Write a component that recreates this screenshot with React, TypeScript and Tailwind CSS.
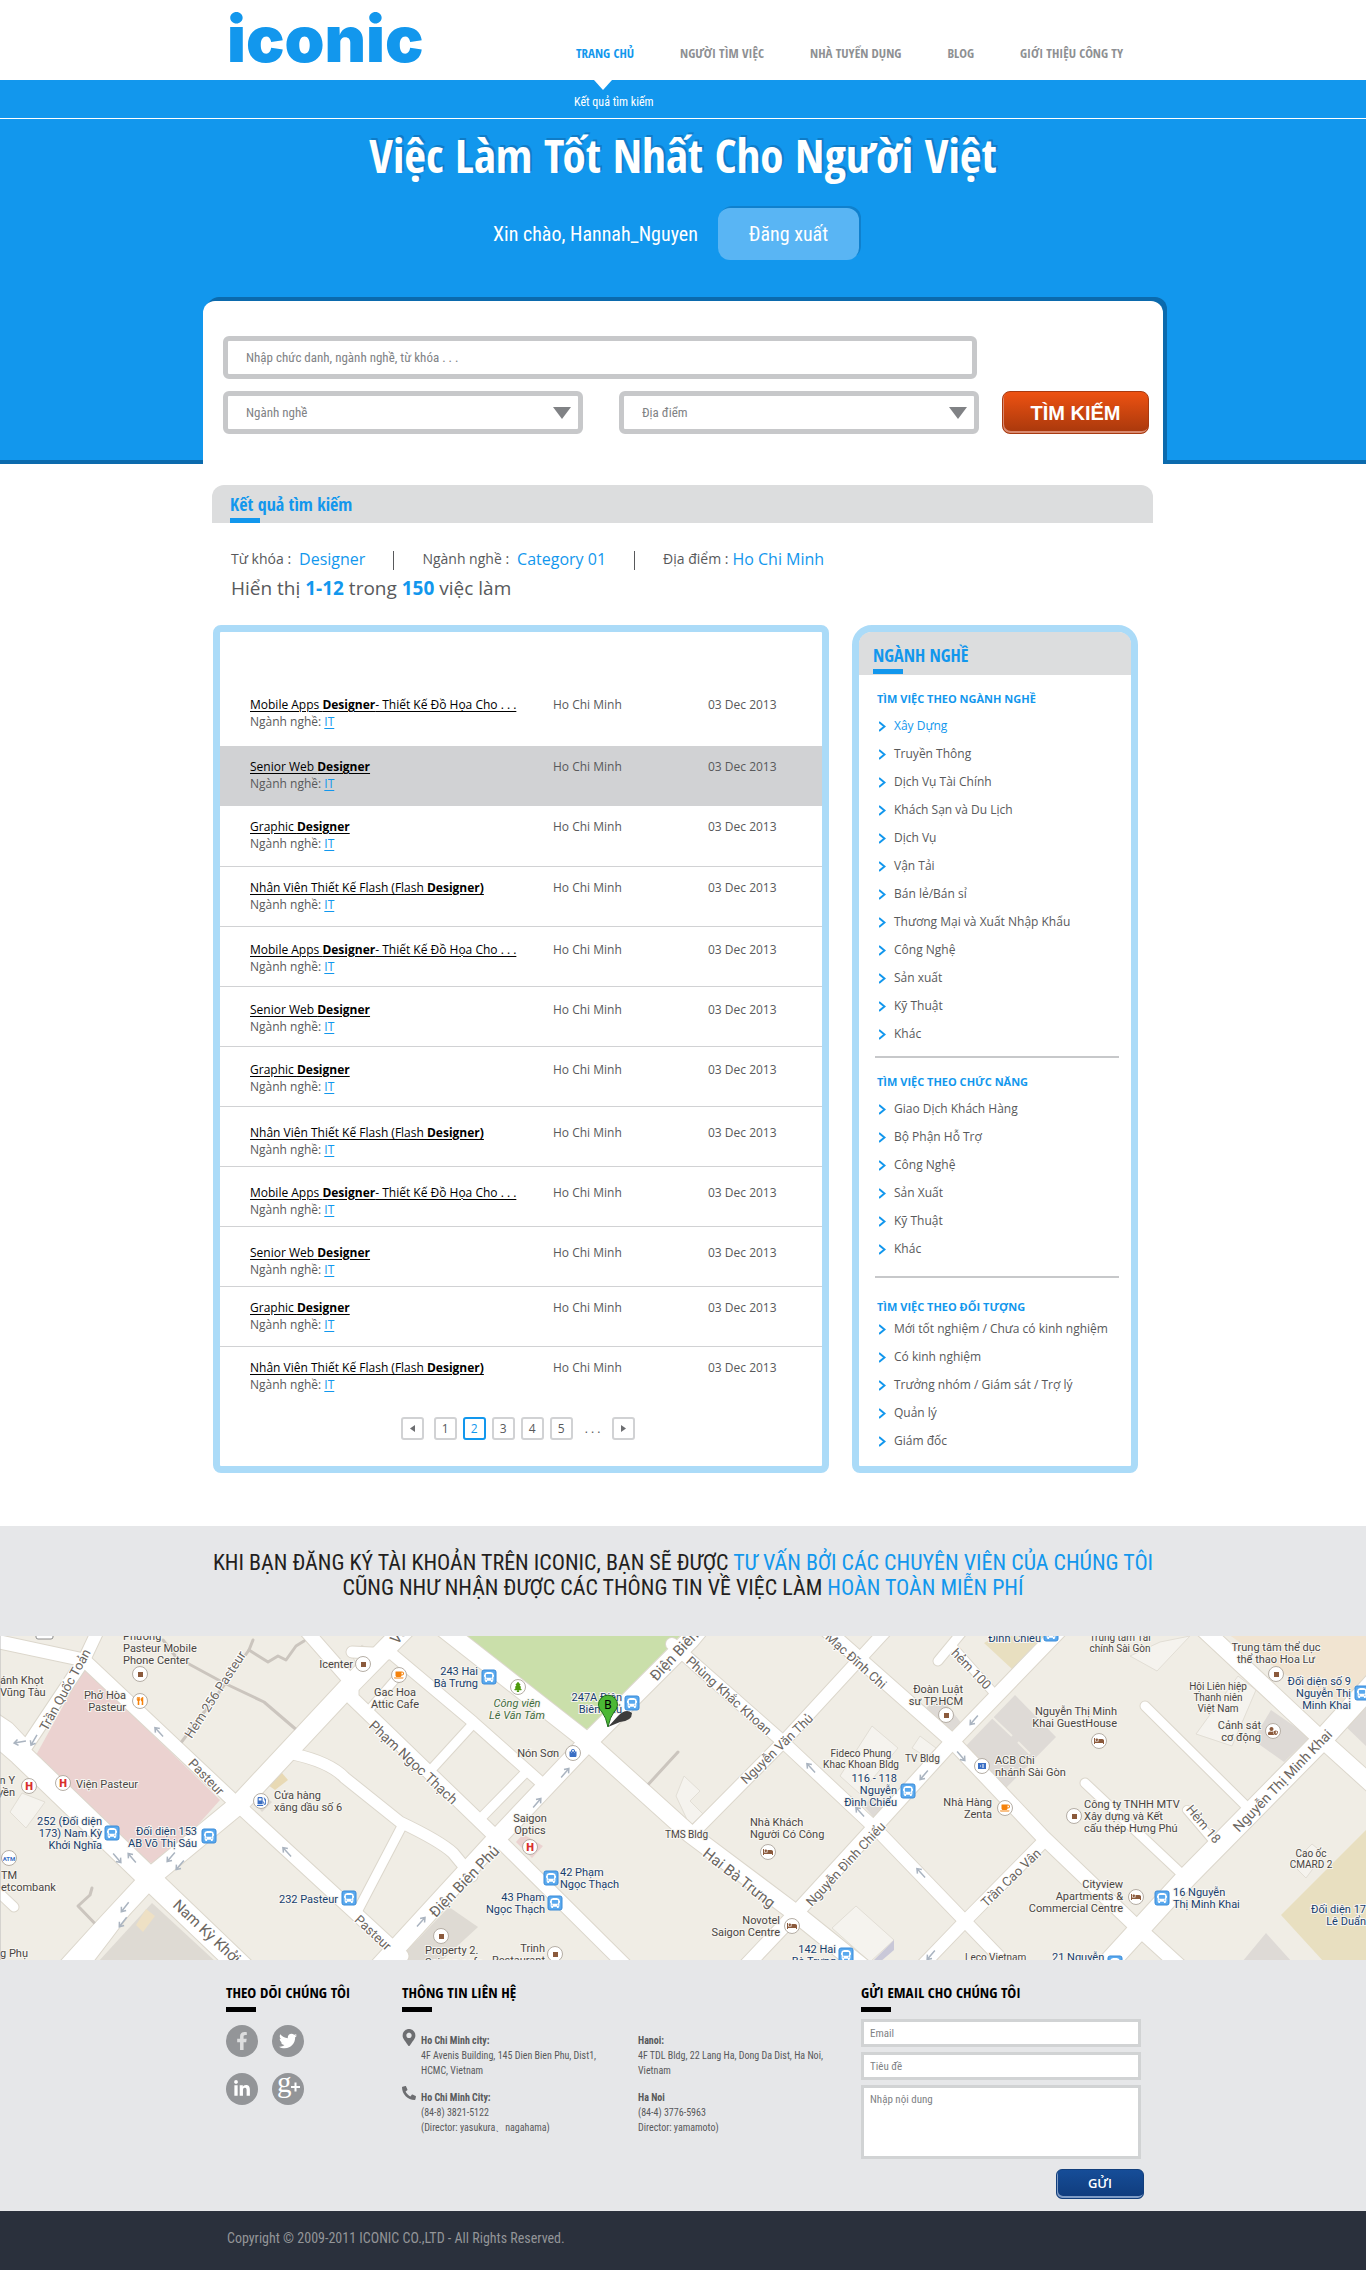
import type { ReactNode } from "react";
import {
  FaBed,
  FaBus,
  FaCoffee,
  FaFacebookF,
  FaGasPump,
  FaLinkedinIn,
  FaMapMarkerAlt,
  FaPhone,
  FaShoppingBag,
  FaTree,
  FaTwitter,
  FaUserShield,
  FaUtensils,
} from "react-icons/fa";

const CONDENSED_BOLD = "font-['Open_Sans_Condensed','Open_Sans',sans-serif] font-bold";
const CONDENSED = "font-['Roboto_Condensed',Roboto,sans-serif]";

/* ------------------------------------------------------------------ */
/* Header and hero                                                     */
/* ------------------------------------------------------------------ */

const navItems = ["TRANG CHỦ", "NGƯỜI TÌM VIỆC", "NHÀ TUYỂN DỤNG", "BLOG", "GIỚI THIỆU CÔNG TY"];

function Header() {
  return (
    <header className="bg-white">
      <div className="mx-auto flex h-20 max-w-[960px] items-start justify-between pl-6 pr-10">
        <a href="#" className="font-[Inter,sans-serif] text-[64px] font-black leading-[78px] text-[#1297ed]">
          iconic
        </a>
        <nav className={`${CONDENSED_BOLD} mt-[43px] flex gap-[46px] text-[13px] leading-5 text-[#8e9093]`}>
          {navItems.map((item, i) => (
            <a key={item} href="#" className={i === 0 ? "text-[#1297ed]" : ""}>
              {item}
            </a>
          ))}
        </nav>
      </div>
    </header>
  );
}

function SelectBox({ label, id }: { label: string; id: string }) {
  return (
    <div className="relative w-[360px]">
      <select
        id={id}
        aria-label={label}
        className={`${CONDENSED} h-[43px] w-full appearance-none rounded-md border-[5px] border-[#c7c8ca] bg-white px-[18px] text-[13px] text-[#808285]`}
      >
        <option>{label}</option>
      </select>
      <svg className="pointer-events-none absolute right-3 top-4 h-3 w-[18px]" viewBox="0 0 18 12" aria-hidden="true">
        <path d="M0 0h18L9 12z" fill="#808285" />
      </svg>
    </div>
  );
}

function Hero() {
  return (
    <section className="bg-[#1297ed] shadow-[inset_0_-4px_0_#0b6aad]">
      <div className="border-b border-white">
        <div className="mx-auto h-[38px] max-w-[960px] pl-[371px]">
          <svg className="ml-5 h-[10px] w-[18px]" viewBox="0 0 18 10" aria-hidden="true">
            <path d="M0 0h18L9 10z" fill="#fff" />
          </svg>
          <a href="#" className={`${CONDENSED} block text-[12px] leading-6 text-white`}>
            Kết quả tìm kiếm
          </a>
        </div>
      </div>

      <h1
        className={`${CONDENSED_BOLD} pt-2 text-center text-[47px] leading-[56px] text-white [text-shadow:2px_-2px_0_#0f7cc7]`}
      >
        Việc Làm Tốt Nhất Cho Người Việt
      </h1>

      <div className={`${CONDENSED} mt-[25px] flex items-center justify-center gap-5 pr-3.5 text-[20px] text-white`}>
        <span>Xin chào, Hannah_Nguyen</span>
        <button
          type="button"
          className="h-[52px] w-[141px] rounded-xl bg-[#59b5f4] shadow-[2px_-2px_0_#0f80cd]"
        >
          Đăng xuất
        </button>
      </div>

      <form
        className="mx-auto mt-[41px] h-[163px] max-w-[960px] rounded-t-xl bg-white pl-5 pr-3.5 pt-[35px] shadow-[4px_-4px_0_#0b6aad]"
        onSubmit={(e) => e.preventDefault()}
      >
        <input
          type="text"
          aria-label="Từ khóa"
          placeholder="Nhập chức danh, ngành nghề, từ khóa . . ."
          className={`${CONDENSED} block h-[43px] w-[754px] rounded-md border-[5px] border-[#c7c8ca] bg-white px-[18px] text-[13px] placeholder:text-[#808285]`}
        />
        <div className="mt-3 flex">
          <SelectBox label="Ngành nghề" id="category" />
          <div className="ml-9">
            <SelectBox label="Địa điểm" id="location" />
          </div>
          <button
            type="submit"
            className="ml-[23px] h-[43px] w-[147px] rounded-lg border border-[#a83a10] bg-linear-to-b from-[#ee5212] to-[#a8380c] font-['Liberation_Sans',Arial,sans-serif] text-[20px] font-bold text-white shadow-[inset_1px_-2px_0_#d98a70]"
          >
            TÌM KIẾM
          </button>
        </div>
      </form>
    </section>
  );
}

/* ------------------------------------------------------------------ */
/* Search results                                                      */
/* ------------------------------------------------------------------ */

function ResultSummary() {
  return (
    <>
      <div className="ml-[9px] mr-2.5 h-[38px] rounded-t-xl bg-[#dcddde] pl-[18px] pt-[7px]">
        <h2 className={`${CONDENSED_BOLD} text-[18px] leading-6 text-[#1297ed]`}>Kết quả tìm kiếm</h2>
        <div className="mt-0.5 h-[5px] w-[30px] bg-[#1297ed]" />
      </div>

      <div className="pl-7 text-[#58595b]">
        <div className="mt-6 flex text-[14px] leading-6">
          <span>Từ khóa :</span>
          <span className="ml-2 text-[16px] font-medium text-[#1297ed]">Designer</span>
          <span className="mx-7 h-[19px] w-px translate-y-1 bg-[#58595b]" />
          <span>Ngành nghề :</span>
          <span className="ml-2 text-[16px] font-medium text-[#1297ed]">Category 01</span>
          <span className="mx-7 h-[19px] w-px translate-y-1 bg-[#58595b]" />
          <span>Địa điểm :</span>
          <span className="ml-1 text-[16px] font-medium text-[#1297ed]">Ho Chi Minh</span>
        </div>
        <p className="mt-[3px] text-[19px] leading-7">
          Hiển thị <b className="text-[#1297ed]">1-12</b> trong <b className="text-[#1297ed]">150</b> việc làm
        </p>
      </div>
    </>
  );
}

const jobTitles: ReactNode[] = [
  <>
    Mobile Apps <b>Designer</b>- Thiết Kế Đồ Họa Cho . . .
  </>,
  <>
    Senior Web <b>Designer</b>
  </>,
  <>
    Graphic <b>Designer</b>
  </>,
  <>
    Nhân Viên Thiết Kế Flash (Flash <b>Designer)</b>
  </>,
];

const rowPadding = ["pt-3", "pt-3.5", "pt-[17px]"];
const rows = [0, 0, 0, 0, 1, 1, 1, 2, 2, 2, 0, 0].map((pad, i) => ({
  title: jobTitles[i % 4],
  pad: rowPadding[pad],
  height: i === 0 ? "h-[62px]" : "h-[60px]",
  active: i === 1,
  ruled: i > 1 && i < 11,
}));

function JobTable() {
  return (
    <table className="w-full table-fixed border-collapse text-left align-top text-[12px] leading-[17px] text-[#58595b]">
      <colgroup>
        <col className="w-[333px]" />
        <col className="w-[155px]" />
        <col />
      </colgroup>
      <tbody>
        {rows.map((row, i) => (
          <tr
            key={i}
            className={`${row.height} align-top ${row.active ? "bg-[#d1d2d4]" : ""} ${
              row.ruled ? "border-b border-[#d1d2d4]" : ""
            }`}
          >
            <td className={`${row.pad} pl-[30px]`}>
              <a href="#" className="text-black underline underline-offset-2">
                {row.title}
              </a>
              <div>
                Ngành nghề:{" "}
                <a href="#" className="text-[#1297ed] underline underline-offset-2">
                  IT
                </a>
              </div>
            </td>
            <td className={row.pad}>Ho Chi Minh</td>
            <td className={row.pad}>03 Dec 2013</td>
          </tr>
        ))}
      </tbody>
    </table>
  );
}

function PageButton({ children, active, label }: { children: ReactNode; active?: boolean; label?: string }) {
  return (
    <button
      type="button"
      aria-label={label}
      className={`flex h-[23px] w-[23px] items-center justify-center rounded-[3px] border-2 ${
        active ? "border-[#1297ed] text-[#1297ed]" : "border-[#d1d2d4]"
      }`}
    >
      {children}
    </button>
  );
}

function Pagination() {
  return (
    <nav
      aria-label="Phân trang"
      className="mt-[11px] flex items-center justify-center gap-1.5 pr-1.5 text-[12px] leading-4 text-[#58595b]"
    >
      <div className="mr-1">
        <PageButton label="Trang trước">
          <svg className="h-[7px] w-[5px]" viewBox="0 0 5 7" aria-hidden="true">
            <path d="M5 0v7L0 3.500z" fill="#6d6e71" />
          </svg>
        </PageButton>
      </div>
      {["1", "2", "3", "4", "5"].map((n) => (
        <PageButton key={n} active={n === "2"}>
          {n}
        </PageButton>
      ))}
      <span className="mx-1.5">. . .</span>
      <PageButton label="Trang sau">
        <svg className="h-[7px] w-[5px]" viewBox="0 0 5 7" aria-hidden="true">
          <path d="M0 0v7l5-3.500z" fill="#6d6e71" />
        </svg>
      </PageButton>
    </nav>
  );
}

const groups = [
  {
    title: "TÌM VIỆC THEO NGÀNH NGHỀ",
    spacing: "pt-4",
    listSpacing: "mt-[5px]",
    items: [
      "Xây Dựng",
      "Truyền Thông",
      "Dịch Vụ Tài Chính",
      "Khách Sạn và Du Lịch",
      "Dịch Vụ",
      "Vận Tải",
      "Bán lẻ/Bán sỉ",
      "Thương Mại và Xuất Nhập Khẩu",
      "Công Nghệ",
      "Sản xuất",
      "Kỹ Thuật",
      "Khác",
    ],
  },
  {
    title: "TÌM VIỆC THEO CHỨC NĂNG",
    spacing: "mt-2 border-t-2 border-[#c7c8ca] pt-4",
    listSpacing: "mt-[5px]",
    items: ["Giao Dịch Khách Hàng", "Bộ Phận Hỗ Trợ", "Công Nghệ", "Sản Xuất", "Kỹ Thuật", "Khác"],
  },
  {
    title: "TÌM VIỆC THEO ĐỐI TƯỢNG",
    spacing: "mt-[13px] border-t-2 border-[#c7c8ca] pt-[21px]",
    listSpacing: "",
    items: [
      "Mới tốt nghiệm / Chưa có kinh nghiệm",
      "Có kinh nghiệm",
      "Trưởng nhóm / Giám sát / Trợ lý",
      "Quản lý",
      "Giám đốc",
    ],
  },
];

function Sidebar() {
  return (
    <aside className="w-[286px] shrink-0 rounded-b-lg rounded-t-[20px] border-[7px] border-[#abdbf8] bg-white pb-2.5">
      <div className="h-[43px] rounded-t-xl bg-[#dcddde] pl-3.5 pt-[9px]">
        <h2 className={`${CONDENSED_BOLD} text-[18px] leading-7 text-[#1297ed]`}>NGÀNH NGHỀ</h2>
        <div className="h-[5px] w-[30px] bg-[#1297ed]" />
      </div>
      {groups.map((group, g) => (
        <section key={group.title} className={`ml-4 mr-3 ${group.spacing}`}>
          <h3 className="pl-0.5 text-[11px] font-bold leading-4 text-[#1297ed]">{group.title}</h3>
          <ul className={`${group.listSpacing} pl-1 text-[12px] leading-7 text-[#58595b]`}>
            {group.items.map((item, i) => (
              <li key={item}>
                <a href="#" className={`flex items-center gap-2 ${g === 0 && i === 0 ? "text-[#1297ed]" : ""}`}>
                  <svg className="h-[11px] w-[7px]" viewBox="0 0 7 11" fill="none" aria-hidden="true">
                    <path d="M0 1l5.500 4.500L0 10" stroke="#1297ed" strokeWidth="2" />
                  </svg>
                  {item}
                </a>
              </li>
            ))}
          </ul>
        </section>
      ))}
    </aside>
  );
}

/* ------------------------------------------------------------------ */
/* Street map                                                          */
/* ------------------------------------------------------------------ */

type Road = [string, number];

const roads: Road[] = [
  ["M0 6L84 24L238 169L352 274L402 320", 13],
  ["M100 -10L84 24L26 111L8 92L-10 80", 12],
  ["M-10 92L20 118L152 245L245 334", 22],
  ["M60 340L100 296L152 240L238 169L352 47L408 -10", 19],
  ["M152 240L128 268L104 300L78 334", 14],
  ["M302 -10L352 47L352 62L497 202L630 334", 13],
  ["M352 16L392 18L473 86L546 151", 11],
  ["M400 38L367 76", 8],
  ["M471 90L429 136", 9],
  ["M528 134L480 183", 9],
  ["M293 118Q330 126 345 142L400 186Q440 205 453 217L472 240", 11],
  ["M402 190L357 276", 9],
  ["M376 334L497 202L588 106L690 4L700 -8", 18],
  ["M440 -10L588 106L690 198L794 276L866 334", 17],
  ["M672 8L781 104L877 194L1012 334", 12],
  ["M822 -10L951 104L1043 201L1139 293L1184 334", 14],
  ["M890 -10L785 104L690 200", 12],
  ["M1064 -10L951 107L872 194L796 277L742 334", 14],
  ["M918 334L969 281L1045 204", 12],
  ["M1102 334L1187 241L1319 107L1380 40", 20],
  ["M1200 -10L1319 101L1380 156", 16],
  ["M1145 70L1249 173", 9],
  ["M1085 147L1185 241", 9],
  ["M1187 174L1216 208", 8],
  ["M962 -4L938 25", 9],
  ["M953 11L993 56", 8],
  ["M-5 253L14 271", 9],
];

const paths = [
  "M163 4L176 21L224 47L264 66L299 96",
  "M253 4L249 14L220 55L180 108",
  "M249 14L268 26L278 20L286 24L296 10L304 5",
  "M678 116L645 152",
  "M92 252L90 259L78 270L103 296",
];

type Place = { x: number; y: number; lines: string[]; at?: "start" | "middle" | "end"; kind?: "bus" | "park"; small?: boolean };

const places: Place[] = [
  { x: 123, y: 4, lines: ["Phương", "Pasteur Mobile", "Phone Center"] },
  { x: 0, y: 48, lines: ["ánh Khọt", "Vũng Tàu"] },
  { x: 126, y: 63, lines: ["Phở Hòa", "Pasteur"], at: "end" },
  { x: 353, y: 32, lines: ["Icenter"], at: "end" },
  { x: 395, y: 60, lines: ["Gac Hoa", "Attic Cafe"], at: "middle" },
  { x: 478, y: 39, lines: ["243 Hai", "Bà Trưng"], at: "end", kind: "bus" },
  { x: 517, y: 71, lines: ["Công viên", "Lê Văn Tám"], at: "middle", kind: "park" },
  { x: 622, y: 65, lines: ["247A Điện", "Biên Phủ"], at: "end", kind: "bus" },
  { x: 559, y: 121, lines: ["Nón Sơn"], at: "end" },
  { x: 530, y: 186, lines: ["Saigon", "Optics"], at: "middle" },
  { x: 560, y: 240, lines: ["42 Phạm", "Ngọc Thạch"], kind: "bus" },
  { x: 545, y: 265, lines: ["43 Phạm", "Ngọc Thạch"], at: "end", kind: "bus" },
  { x: 425, y: 318, lines: ["Property 2.", "Saigon cafe"] },
  { x: 545, y: 316, lines: ["Trinh", "Restaurant"], at: "end" },
  { x: 338, y: 267, lines: ["232 Pasteur"], at: "end", kind: "bus" },
  { x: 274, y: 163, lines: ["Cửa hàng", "xăng dầu số 6"] },
  { x: 76, y: 152, lines: ["Viện Pasteur"] },
  { x: 102, y: 189, lines: ["252 (Đối diện", "173) Nam Kỳ", "Khởi Nghĩa"], at: "end", kind: "bus" },
  { x: 197, y: 199, lines: ["Đối diện 153", "AB Võ Thị Sáu"], at: "end", kind: "bus" },
  { x: 15, y: 148, lines: ["n Y", "yền"], at: "end" },
  { x: 1, y: 243, lines: ["TM", "etcombank"] },
  { x: 0, y: 321, lines: ["g Phụ"] },
  { x: 665, y: 202, lines: ["TMS Bldg"], small: true },
  { x: 1041, y: 6, lines: ["Đình Chiểu"], at: "end", kind: "bus" },
  { x: 1120, y: 5, lines: ["Trung tâm Tài", "chính Sài Gòn"], at: "middle", small: true },
  { x: 1276, y: 15, lines: ["Trung tâm thể dục", "thể thao Hoa Lư"], at: "middle" },
  { x: 1351, y: 49, lines: ["Đối diện số 9", "Nguyễn Thị", "Minh Khai"], at: "end", kind: "bus" },
  { x: 1218, y: 54, lines: ["Hội Liên hiệp", "Thanh niên", "Việt Nam"], at: "middle", small: true },
  { x: 1261, y: 93, lines: ["Cảnh sát", "cơ động"], at: "end" },
  { x: 963, y: 57, lines: ["Đoàn Luật", "sư TP.HCM"], at: "end" },
  { x: 1117, y: 79, lines: ["Nguyễn Thị Minh", "Khai GuestHouse"], at: "end" },
  { x: 861, y: 121, lines: ["Fideco Phung", "Khac Khoan Bldg"], at: "middle", small: true },
  { x: 905, y: 126, lines: ["TV Bldg"], small: true },
  { x: 897, y: 146, lines: ["116 - 118", "Nguyễn", "Đình Chiểu"], at: "end", kind: "bus" },
  { x: 995, y: 128, lines: ["ACB Chi", "nhánh Sài Gòn"] },
  { x: 992, y: 170, lines: ["Nhà Hàng", "Zenta"], at: "end" },
  { x: 750, y: 190, lines: ["Nhà Khách", "Người Có Công"] },
  { x: 1084, y: 172, lines: ["Công ty TNHH MTV", "Xây dựng và Kết", "cấu thép Hưng Phú"] },
  { x: 1311, y: 221, lines: ["Cao ốc", "CMARD 2"], at: "middle", small: true },
  { x: 1123, y: 252, lines: ["Cityview", "Apartments &", "Commercial Centre"], at: "end" },
  { x: 1173, y: 260, lines: ["16 Nguyễn", "Thị Minh Khai"], kind: "bus" },
  { x: 1366, y: 277, lines: ["Đối diện 17", "Lê Duẩn"], at: "end", kind: "bus" },
  { x: 780, y: 288, lines: ["Novotel", "Saigon Centre"], at: "end" },
  { x: 836, y: 317, lines: ["142 Hai", "Bà Trưng"], at: "end", kind: "bus" },
  { x: 965, y: 325, lines: ["Leco Vietnam"], small: true },
  { x: 1052, y: 325, lines: ["21 Nguyễn"], kind: "bus" },
];

/* name, centre x, centre y, angle, text size */
const streets: [string, number, number, number, number][] = [
  ["Trần Quốc Toản", 69, 56, -61, 13],
  ["Hẻm 256 Pasteur", 219, 61, -57, 13],
  ["Pasteur", 203, 144, 46, 13],
  ["Phạm Ngọc Thạch", 410, 130, 43, 14],
  ["Điện Biên Phủ", 468, 249, -46, 15],
  ["Pasteur", 370, 300, 43, 13],
  ["Nam Kỳ Khởi Nghĩa", 219, 314, 43, 15],
  ["Võ Thị Sáu", 420, -18, -50, 15],
  ["Điện Biên Phủ", 688, 12, -47, 15],
  ["Phùng Khắc Khoan", 726, 63, 42, 13],
  ["Mạc Đĩnh Chi", 853, 28, 42, 13],
  ["Nguyễn Văn Thủ", 780, 116, -44, 13],
  ["hẻm 100", 968, 36, 46, 13],
  ["Nguyễn Đình Chiểu", 849, 231, -47, 13],
  ["Hai Bà Trưng", 736, 246, 38, 15],
  ["Trần Cao Vân", 1014, 245, -44, 13],
  ["Nguyễn Thị Minh Khai", 1286, 148, -46, 14],
  ["Hẻm 18", 1200, 191, 50, 13],
];

const busStops = [
  [489, 41], [632, 67], [112, 197], [209, 200], [349, 262], [551, 242], [555, 267],
  [1051, -2], [1362, 57], [908, 155], [1162, 262], [846, 319], [1115, 327],
];

const dots = [[363, 28], [140, 38], [441, 300], [555, 318], [946, 79], [1276, 38], [1074, 180]];
const hospitals = [[29, 150], [63, 147], [530, 211]];
const beds = [[1099, 105], [768, 216], [792, 290], [1136, 261]];

const arrows: [number, number, number][] = [
  [159, 96, -133], [287, 216, -133], [34, 104, 120], [20, 106, 170], [117, 222, 50], [132, 222, -130],
  [171, 221, 130], [180, 229, 130], [125, 271, 128], [123, 286, 128], [565, 137, -50], [537, 167, -50],
  [421, 286, -48], [811, 132, -133], [860, 176, -133], [921, 237, -133], [961, 120, 50], [924, 139, 130],
  [974, 84, 130], [931, 319, 130],
];

function Poi({ x, y, children }: { x: number; y: number; children?: ReactNode }) {
  return (
    <g>
      <circle cx={x} cy={y} r="7.500" fill="#fff" stroke="#b5aea5" />
      {children}
    </g>
  );
}

function StreetMap() {
  return (
    <svg
      className="block h-[324px] w-full font-[Roboto,sans-serif]"
      viewBox="0 0 1366 324"
      preserveAspectRatio="xMidYMid slice"
      role="img"
      aria-label="Bản đồ"
    >
      <rect width="1366" height="324" fill="#f0ede5" />
      <path d="M84 32L220 164L169 221L152 227L132 221L35 121z" fill="#ebd2d0" />
      <path d="M464 -2H682L594 87Q588 95 579 94z" fill="#cadfaa" />
      <path d="M152 267L216 326H98z" fill="#dedad3" />
      <path d="M449 271L478 291L440 326H396z" fill="#dedad3" />
      <path d="M146 273L155 280L143 296L136 289z" fill="#eee0c4" />
      <path d="M282 137L288 144L275 154L268 149z" fill="#e8d9b4" />
      <path d="M254 166L262 176L272 166L262 158z" fill="#dedad3" />
      <path d="M523 198L543 210L532 222L516 206z" fill="#ebd2d0" />
      <path d="M1015 59L1056 101L1004 154L964 112z" fill="#dedad6" />
      <path d="M940 60L962 88L951 100L924 74z" fill="#dedad6" />
      <path d="M991 80L1012 100M1018 106L1030 118" stroke="#f0ede5" strokeWidth="2" />
      <path d="M1271 74L1310 101L1284 126L1253 104z" fill="#dedad6" />
      <path d="M1340 85L1366 110V62z" fill="#dedad6" />
      <path d="M1266 297L1242 326H1292z" fill="#dedad6" />
      <path d="M984 7L1000 -2H1045L1012 33z" fill="#e8dfc0" />
      <path d="M1366 194L1281 279L1324 326H1366z" fill="#e8dfc0" />
      <path d="M1228 -2H1366V48L1344 66L1310 56z" fill="#f1e4d1" />
      <path d="M870 162L892 176L874 182L864 170z" fill="#dedad6" />
      <g fill="#f5f3ee" stroke="#e2ded5">
        <path d="M22 157L45 166L26 192L10 176z" />
        <path d="M684 140L700 155L690 165L703 178L690 190L676 160z" />
        <path d="M872 90L898 112L860 158L840 140z" />
        <path d="M920 100L936 112L928 122L912 112z" />
        <path d="M1238 40L1256 54L1232 110L1196 98z" />
        <path d="M1130 20L1160 6L1190 0L1157 35z" />
        <path d="M1312 208L1324 218L1306 242L1292 228z" />
        <path d="M856 270L894 304L870 326L832 292z" />
        <path d="M352 20L362 9L373 18L360 34z" />
      </g>
      <path d="M894 304V314L880 326H872z" fill="#c9c8d8" />

      <g fill="none" strokeLinejoin="round" strokeLinecap="round">
        {roads.map(([d, w]) => (
          <path key={d} d={d} stroke="#dcd7cc" strokeWidth={w + 2} />
        ))}
        {paths.map((d) => (
          <path key={d} d={d} stroke="#cbc5be" strokeWidth="3" />
        ))}
        {roads.map(([d, w]) => (
          <path key={d} d={d} stroke="#fff" strokeWidth={w} />
        ))}
      </g>

      <g fill="none" stroke="#aab4c0" strokeWidth="1.500">
        {arrows.map(([x, y, a]) => (
          <path key={`${x}-${y}`} d="M-6 0H6M2 -3L6 0L2 3" transform={`translate(${x} ${y}) rotate(${a})`} />
        ))}
      </g>

      <g fill="#6b6661" textAnchor="middle" stroke="#fff" strokeWidth="2" paintOrder="stroke">
        {streets.map(([name, x, y, a, size]) => (
          <text key={`${name}-${x}`} fontSize={size} transform={`translate(${x} ${y}) rotate(${a})`}>
            {name}
          </text>
        ))}
      </g>

      {busStops.map(([x, y]) => (
        <g key={`${x}-${y}`}>
          <rect x={x - 7} y={y - 7} width="14" height="14" rx="2" fill="#5aa9ee" stroke="#3a8bd8" />
          <FaBus x={x - 5} y={y - 5} size={10} color="#fff" />
        </g>
      ))}
      {dots.map(([x, y]) => (
        <Poi key={`${x}-${y}`} x={x} y={y}>
          <rect x={x - 2} y={y - 2} width="5" height="5" fill="#8b5a3c" />
        </Poi>
      ))}
      {hospitals.map(([x, y]) => (
        <Poi key={`${x}-${y}`} x={x} y={y}>
          <text x={x} y={y + 4} fontSize="11" fontWeight="900" textAnchor="middle" fill="#d9302c">
            H
          </text>
        </Poi>
      ))}
      {beds.map(([x, y]) => (
        <Poi key={`${x}-${y}`} x={x} y={y}>
          <FaBed x={x - 5} y={y - 5} size={10} color="#8b5a3c" />
        </Poi>
      ))}
      <Poi x={140} y={65}>
        <FaUtensils x={136} y={61} size={8} color="#f5820b" />
      </Poi>
      <Poi x={399} y={39}>
        <FaCoffee x={394} y={34} size={10} color="#f5820b" />
      </Poi>
      <Poi x={1005} y={172}>
        <FaCoffee x={1000} y={167} size={10} color="#f5820b" />
      </Poi>
      <Poi x={261} y={165}>
        <FaGasPump x={257} y={161} size={9} color="#3b6fc4" />
      </Poi>
      <Poi x={518} y={51}>
        <FaTree x={513} y={46} size={10} color="#4d9a0b" />
      </Poi>
      <Poi x={573} y={117}>
        <FaShoppingBag x={569} y={113} size={8} color="#3b6fc4" />
      </Poi>
      <Poi x={1273} y={95}>
        <FaUserShield x={1268} y={90} size={10} color="#8b5a3c" />
      </Poi>
      <Poi x={982} y={130}>
        <rect x="978" y="127" width="8" height="6" fill="#3b6fc4" />
        <path d="M980 130h1M983 128v4" stroke="#fff" />
      </Poi>
      <Poi x={9} y={222}>
        <text x="9" y="225" fontSize="6" fontWeight="700" textAnchor="middle" fill="#3b6fc4">
          ATM
        </text>
      </Poi>
      <rect x="36" y="-8" width="17" height="11" rx="2" fill="#fff" stroke="#8b8b8b" />

      <g stroke="#f7f5f0" strokeWidth="2" paintOrder="stroke">
        {places.map((p) => (
          <text
            key={`${p.x}-${p.y}`}
            y={p.y}
            fontSize={p.small ? 10 : 11}
            textAnchor={p.at ?? "start"}
            fontStyle={p.kind === "park" ? "italic" : "normal"}
            fill={p.kind === "bus" ? "#17406d" : p.kind === "park" ? "#3f6b3c" : "#4a4542"}
          >
            {p.lines.map((line, i) => (
              <tspan key={line} x={p.x} dy={i === 0 ? 0 : p.small ? 11 : 12}>
                {line}
              </tspan>
            ))}
          </text>
        ))}
      </g>

      <path d="M608 91L618 80Q626 72 632 77Q632 85 620 86z" fill="#3c3c3c" />
      <path
        d="M608 91Q606 81 602 76A9.500 9.500 0 1 1 614 76Q610 81 608 91z"
        fill="#4bb834"
        stroke="#1c6b18"
      />
      <text x="608" y="73" fontSize="12" textAnchor="middle" fill="#000">
        B
      </text>
      <path d="M0 0V324" stroke="#b9b9b9" />
    </svg>
  );
}

/* ------------------------------------------------------------------ */
/* Footer                                                              */
/* ------------------------------------------------------------------ */

function FooterHeading({ children }: { children: ReactNode }) {
  return (
    <>
      <h2 className={`${CONDENSED_BOLD} text-[15px] leading-6 text-black`}>{children}</h2>
      <div className="mt-[3px] h-[5px] w-[30px] bg-black" />
    </>
  );
}

function Social({ label, children }: { label: string; children: ReactNode }) {
  return (
    <a
      href="#"
      aria-label={label}
      className="flex h-8 w-8 items-center justify-center rounded-full bg-[#939598] text-white"
    >
      {children}
    </a>
  );
}

function Address({ title, lines, icon }: { title: string; lines: string[]; icon?: ReactNode }) {
  return (
    <div className="relative">
      {icon && <span className="absolute -left-5 -top-1 flex w-4 justify-center">{icon}</span>}
      <h3 className="font-bold">{title}</h3>
      {lines.map((line) => (
        <p key={line}>{line}</p>
      ))}
    </div>
  );
}

const fieldClass =
  "font-['Roboto_Condensed',Roboto,sans-serif] block w-full border-[3px] border-[#d1d3d4] bg-white px-1.5 text-[11px] placeholder:text-[#808285]";

function Footer() {
  return (
    <footer>
      <div className="bg-[#e6e7e9] pb-3 pt-5">
        <div className="mx-auto flex max-w-[960px] pl-[23px]">
          <div className="w-44 shrink-0">
            <FooterHeading>THEO DÕI CHÚNG TÔI</FooterHeading>
            <div className="mt-[13px] grid w-fit grid-cols-2 gap-x-3.5 gap-y-4">
              <Social label="Facebook">
                <FaFacebookF className="text-[#dcddde]" size={18} />
              </Social>
              <Social label="Twitter">
                <FaTwitter size={18} />
              </Social>
              <Social label="LinkedIn">
                <FaLinkedinIn size={18} />
              </Social>
              <Social label="Google Plus">
                <svg className="h-8 w-8 font-['Liberation_Serif',serif]" viewBox="0 0 32 32" aria-hidden="true">
                  <text x="5" y="19" fontSize="29" fill="#fff">
                    g
                  </text>
                  <path d="M19 14h9M23.500 9.500v9" stroke="#fff" strokeWidth="2" />
                </svg>
              </Social>
            </div>
          </div>

          <div className="w-[459px] shrink-0">
            <FooterHeading>THÔNG TIN LIÊN HỆ</FooterHeading>
            <div
              className={`${CONDENSED} mt-[21px] grid grid-cols-[217px_1fr] gap-y-3 pl-[19px] text-[10px] leading-[15px] text-[#58595b]`}
            >
              <Address
                title="Ho Chi Minh city:"
                lines={["4F Avenis Building, 145 Dien Bien Phu, Dist1,", "HCMC,  Vietnam"]}
                icon={<FaMapMarkerAlt size={17} className="text-[#6d6e71]" />}
              />
              <Address title="Hanoi:" lines={["4F TDL Bldg, 22 Lang Ha, Dong Da Dist, Ha Noi,", "Vietnam"]} />
              <Address
                title="Ho Chi Minh City:"
                lines={["(84-8) 3821-5122", "(Director: yasukura、nagahama)"]}
                icon={<FaPhone size={14} className="-scale-x-100 text-[#6d6e71]" />}
              />
              <Address title="Ha Noi" lines={["(84-4) 3776-5963", "Director: yamamoto)"]} />
            </div>
          </div>

          <form className="w-[280px]" onSubmit={(e) => e.preventDefault()}>
            <FooterHeading>GỬI EMAIL CHO CHÚNG TÔI</FooterHeading>
            <div className="mt-[7px] flex flex-col gap-[5px]">
              <input type="email" aria-label="Email" placeholder="Email" className={`${fieldClass} h-7`} />
              <input type="text" aria-label="Tiêu đề" placeholder="Tiêu đề" className={`${fieldClass} h-7`} />
              <textarea
                aria-label="Nhập nội dung"
                placeholder="Nhập nội dung"
                className={`${fieldClass} h-[74px] resize-none pt-1`}
              />
            </div>
            <button
              type="submit"
              className="-mr-[3px] ml-auto mt-2.5 block h-[30px] w-[88px] rounded-md border border-[#123f7c] bg-linear-to-b from-[#164d98] to-[#103c7c] text-[13px] font-semibold text-white shadow-[inset_1px_-2px_0_#7f9cc5]"
            >
              GỬI
            </button>
          </form>
        </div>
      </div>
      <div className="bg-[#2a303c] pb-[22px] pt-[17px]">
        <p className={`${CONDENSED} mx-auto max-w-[960px] pl-6 text-[14px] leading-5 text-[#939598]`}>
          Copyright © 2009-2011 ICONIC CO.,LTD - All Rights Reserved.
        </p>
      </div>
    </footer>
  );
}

export default function App() {
  return (
    <div className="bg-white font-['Open_Sans','Noto_Sans',sans-serif]">
      <Header />
      <Hero />
      <main className="mx-auto max-w-[960px] pt-[21px]">
        <ResultSummary />
        <div className="mt-[23px] flex gap-[23px] pl-2.5">
          <section className="w-[616px] shrink-0 rounded-lg border-[7px] border-[#abdbf8] bg-white pb-[26px] pt-[52px]">
            <JobTable />
            <Pagination />
          </section>
          <Sidebar />
        </div>
      </main>

      <section className={`${CONDENSED} mt-[53px] bg-[#e6e7e9] pb-9 pt-6 text-center text-[22px] leading-[25px] text-[#231f20]`}>
        <p>
          KHI BẠN ĐĂNG KÝ TÀI KHOẢN TRÊN ICONIC, BẠN SẼ ĐƯỢC{" "}
          <span className="text-[#1297ed]">TƯ VẤN BỞI CÁC CHUYÊN VIÊN CỦA CHÚNG TÔI</span>
        </p>
        <p>
          CŨNG NHƯ NHẬN ĐƯỢC CÁC THÔNG TIN VỀ VIỆC LÀM <span className="text-[#1297ed]">HOÀN TOÀN MIỄN PHÍ</span>
        </p>
      </section>
      <StreetMap />
      <Footer />
    </div>
  );
}
